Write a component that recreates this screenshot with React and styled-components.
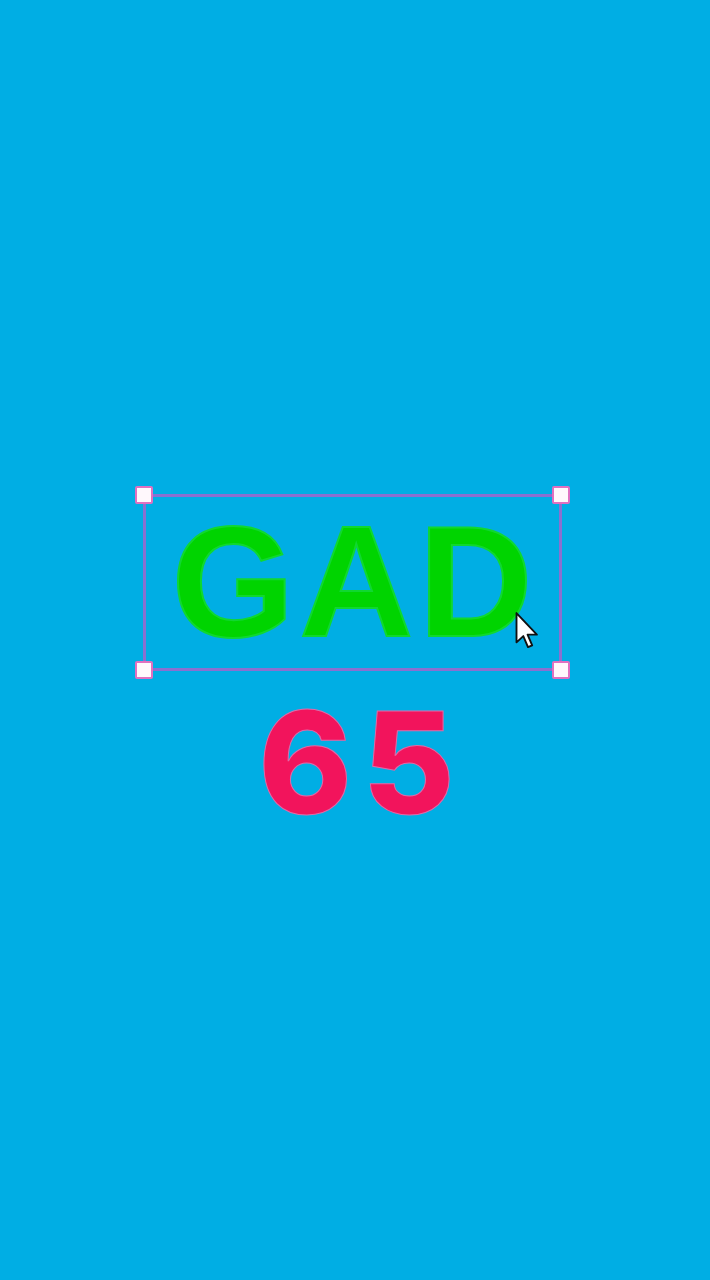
import React from "react";
import styled, { createGlobalStyle } from "styled-components";

const GlobalStyle = createGlobalStyle`
  html, body {
    margin: 0;
    padding: 0;
    background: #00aee4;
  }
`;

function Handle({ corner }) {
  return <HandleBox $corner={corner} />;
}

function Cursor() {
  return (
    <CursorSvg viewBox="0 0 26 44" width="28" height="46">
      <path
        d="M2 2 L2 30 L8.5 24 L13 34.5 L17 32.8 L12.6 22.6 L21.5 22.6 Z"
        fill="#ffffff"
        stroke="#111"
        strokeWidth="1.8"
        strokeLinejoin="round"
      />
    </CursorSvg>
  );
}

function App() {
  return (
    <>
      <GlobalStyle />
      <Page>
        <Selection>
          <Word>GAD</Word>
          <Handle corner="tl" />
          <Handle corner="tr" />
          <Handle corner="bl" />
          <Handle corner="br" />
          <Cursor />
        </Selection>
        <Number>65</Number>
      </Page>
    </>
  );
}

const Page = styled.div`
  height: 1280px;
  display: flex;
  flex-direction: column;
  align-items: center;
  padding-top: 494px;
  box-sizing: border-box;
  overflow: hidden;
`;

const Selection = styled.div`
  position: relative;
  width: 419px;
  height: 177px;
  box-sizing: border-box;
  border: 3px solid #8a70d0;
  display: flex;
  align-items: center;
  justify-content: center;
  margin-left: -5px;
`;

const Word = styled.div`
  font-family: "Liberation Sans", Arial, sans-serif;
  font-weight: 700;
  font-size: 158px;
  line-height: 1;
  color: #00d400;
  -webkit-text-stroke: 2px #10d830;
  margin-top: -4px;
  margin-left: 4px;
  letter-spacing: 5px;
`;

const HandleBox = styled.div`
  position: absolute;
  width: 18px;
  height: 18px;
  box-sizing: border-box;
  background: #fff8fc;
  border: 2px solid #e070c0;
  border-radius: 2px;
  top: ${(p) => (p.$corner[0] === "t" ? "-11px" : "auto")};
  bottom: ${(p) => (p.$corner[0] === "b" ? "-11px" : "auto")};
  left: ${(p) => (p.$corner[1] === "l" ? "-11px" : "auto")};
  right: ${(p) => (p.$corner[1] === "r" ? "-11px" : "auto")};
`;

const CursorSvg = styled.svg`
  position: absolute;
  left: 368px;
  top: 114px;
`;

const Number = styled.div`
  font-family: Inter, "Liberation Sans", sans-serif;
  font-weight: 800;
  font-size: 142px;
  line-height: 1;
  color: #f2145c;
  -webkit-text-stroke: 1px #e06aa8;
  margin-top: 20px;
  margin-left: 13px;
  letter-spacing: 10px;
`;

export default App;
